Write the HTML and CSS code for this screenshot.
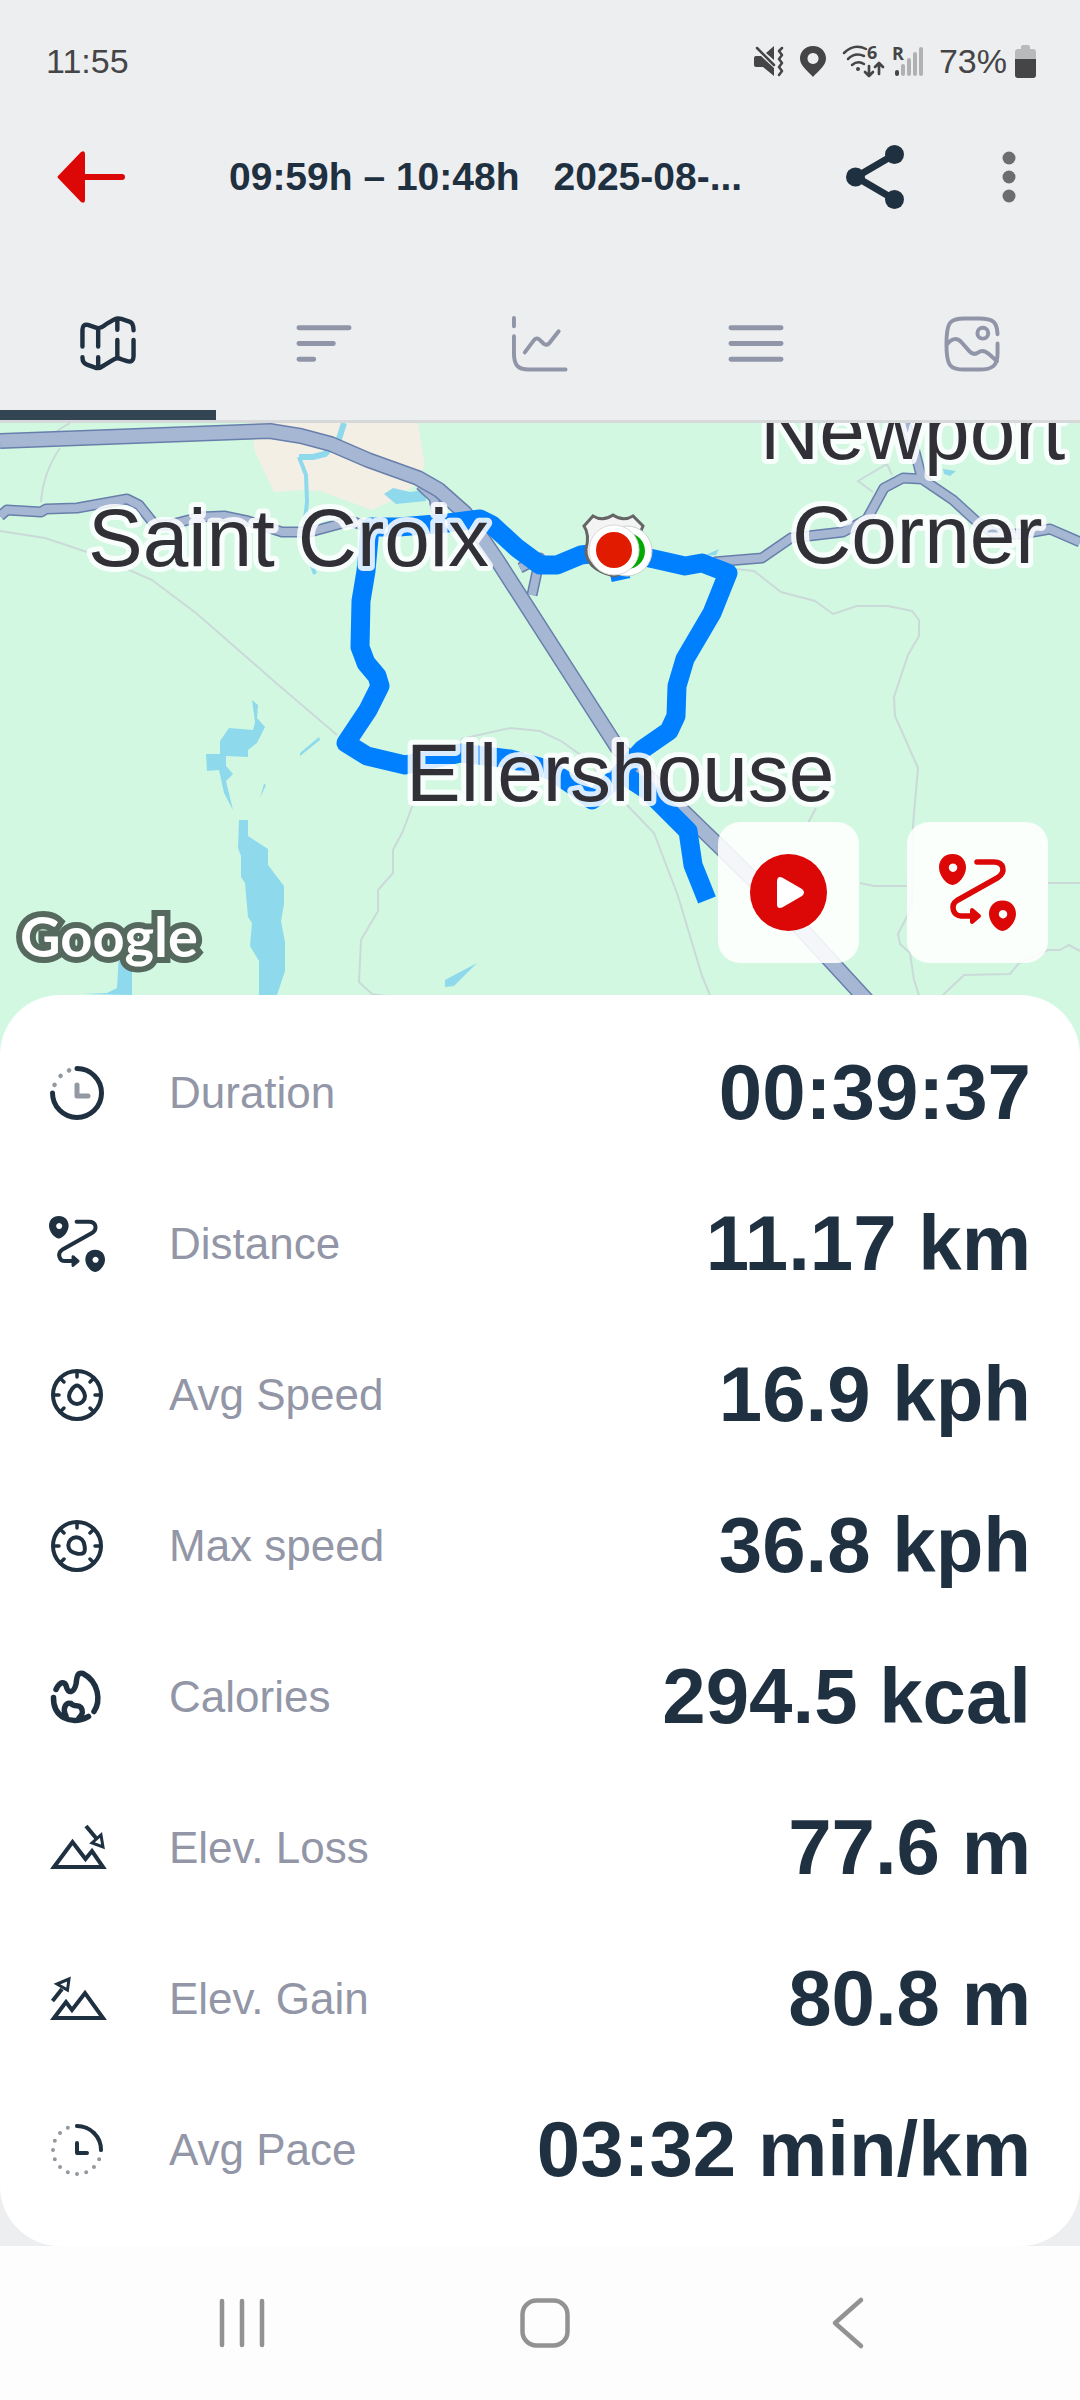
FILE: index.html
```html
<!DOCTYPE html>
<html lang="en">
<head>
  <meta charset="UTF-8">
  <meta name="viewport" content="width=device-width, initial-scale=1.0">
  <title>Track details</title>
  <link rel="stylesheet" href="styles.css">
</head>
<body>
  <!-- icons used more than once -->
  <svg class="sprite" aria-hidden="true">
    <symbol id="icon-route" viewBox="0 0 77 77">
      <path fill="currentColor" fill-rule="evenodd" d="M13.5 0C22 0 27 6 27 13.5C27 22 19 31 13.5 31S0 22 0 13.5C0 6 5 0 13.5 0ZM14 9.5a4.2 4.2 0 1 0 .01 0ZM63.5 46.5C72 46.5 77 52.5 77 60C77 68 69 77 63.5 77S50 68 50 60C50 52.5 55 46.5 63.5 46.5ZM64 56a4.2 4.2 0 1 0 .01 0Z"/>
      <path class="line" stroke-width="5.5" d="M38 8H55C65 8 67 18 59 23.5L18 46.5C11 51 14 62 22 62H34"/>
      <path fill="currentColor" stroke="currentColor" stroke-width="4" stroke-linejoin="round" d="M33 56L40 62L33 68Z"/>
    </symbol>
    <symbol id="icon-dial" viewBox="0 0 56 56">
      <circle class="line" cx="28" cy="28" r="24" stroke-width="4"/>
      <path class="line" stroke-width="3.5" d="M28 5V10M5 28H10M46 28H51M12 12L15 15M44 12L41 15M12 44L15 41M44 44L41 41"/>
    </symbol>
    <symbol id="icon-drop" viewBox="0 0 56 56">
      <path class="line" stroke-width="4" d="M28 18.5C31 18.5 36 25 36 29A8 8 0 0 1 20 29C20 25 25 18.5 28 18.5Z"/>
    </symbol>
  </svg>

  <header>
    <div class="status-bar">
      <span>11:55</span>
      <div class="status-icons">
        <svg width="30" height="31" viewBox="0 0 30 31" aria-label="Vibrate">
          <path fill="currentColor" d="M0 12Q0 10 2 10H7L20 22V30L9 21H2Q0 21 0 19ZM12 7L20 0V14Z"/>
          <path class="line" stroke-width="2.5" d="M3 2L20 19M28 2L25 5L28 9L25 13L28 17L25 21L28 25L25 29"/>
        </svg>
        <svg width="26" height="31" viewBox="0 0 26 31" aria-label="Location">
          <path fill="currentColor" fill-rule="evenodd" d="M13 0C21 0 26 6 26 12.5C26 20 18 25 13 31C8 25 0 20 0 12.5C0 6 5 0 13 0ZM13 7a5.5 5.5 0 1 0 .01 0Z"/>
        </svg>
        <div class="network">
          <svg width="42" height="33" viewBox="0 0 42 33" aria-label="Wi-Fi 6">
            <path class="line" stroke-width="2.5" d="M2 8Q12 -2 24 4M6 14Q13 7 22 11M10 20Q16 15 22 19"/>
            <circle cx="16" cy="24" r="2" fill="currentColor"/>
            <path class="line" stroke-width="2.7" d="M27 21V30M23 27L27 31L31 27M37 29V18M33 22L37 18L41 22"/>
            <text class="tiny" x="25" y="14">6</text>
          </svg>
          <svg width="31" height="31" viewBox="0 0 31 31" aria-label="Signal, roaming">
            <text class="tiny" x="0" y="14">R</text>
            <path stroke="#b0b1b2" stroke-width="4" stroke-linecap="round" d="M11 28V20M17 28V14M23 28V8M29 28V3"/>
            <path class="line" stroke-width="4" d="M5 26V28"/>
          </svg>
        </div>
        <div class="battery">
          <span>73%</span>
          <svg width="21" height="33" viewBox="0 0 21 33" aria-hidden="true">
            <path fill="#b9babb" d="M6 4V2Q6 0 8 0H13Q15 0 15 2V4H18Q21 4 21 7V15H0V7Q0 4 3 4Z"/>
            <path fill="currentColor" d="M0 14H21V30Q21 33 18 33H3Q0 33 0 30Z"/>
          </svg>
        </div>
      </div>
    </div>

    <div class="toolbar">
      <button type="button" class="back" aria-label="Back">
        <svg width="68" height="52" viewBox="0 0 68 52">
          <path fill="currentColor" d="M2 24L24 1Q28 -1 28 3V23H65Q68 23 68 26T65 29H28V49Q28 53 24 51L2 28Q-1 26 2 24Z"/>
        </svg>
      </button>
      <h1><span>09:59h – 10:48h</span> <span>2025-08-...</span></h1>
      <button type="button" class="share" aria-label="Share">
        <svg width="58" height="64" viewBox="0 0 58 64">
          <path class="line" stroke-width="7" d="M48.5 9.5L10 32L48.5 54.5"/>
          <g fill="currentColor"><circle cx="9.5" cy="32" r="9.5"/><circle cx="48.5" cy="9.5" r="9.5"/><circle cx="48.5" cy="54.5" r="9.5"/></g>
        </svg>
      </button>
      <button type="button" class="more" aria-label="More options">
        <svg width="14" height="52" viewBox="0 0 14 52" fill="currentColor">
          <circle cx="7" cy="7" r="6.5"/><circle cx="7" cy="26" r="6.5"/><circle cx="7" cy="45" r="6.5"/>
        </svg>
      </button>
    </div>

    <nav class="tabs">
      <button type="button" class="tab active" aria-label="Map">
        <svg viewBox="0 0 57 57"><path class="line" stroke-width="4.5" d="M2.500 31V14Q2.500 8 8 9L18.500 12.500Q22 12 27 8L35 3.500Q38 2 42 3L51 6Q54.500 7.500 54.500 14.500M18.500 13V31M38 3V14M2.500 42Q2.500 48 7 49.500L17 53Q20 53.500 24 50.500L34 44.500Q38 42 42 44L48 46Q54.500 47.500 54.500 41V24.500M18.500 42V53M38 24.500V43"/></svg>
      </button>
      <button type="button" class="tab" aria-label="Splits">
        <svg viewBox="0 0 57 57"><path class="line" stroke-width="5" d="M3 12H54M3 28H38M3 44H18"/></svg>
      </button>
      <button type="button" class="tab" aria-label="Charts">
        <svg viewBox="0 0 57 57"><path class="line" stroke-width="4" d="M2 2V10.500M2 20.500V38C2 50 6 54.500 17 54.500H54.500M13 37L22 25Q25 21 28.500 24.500L32 28Q35.500 31 38.500 27L47.500 15.500"/></svg>
      </button>
      <button type="button" class="tab" aria-label="Laps">
        <svg viewBox="0 0 57 57"><path class="line" stroke-width="5" d="M3 12H54M3 28H54M3 44H54"/></svg>
      </button>
      <button type="button" class="tab" aria-label="Photos">
        <svg viewBox="0 0 57 57"><path class="line" stroke-width="4" d="M54.500 18.500C54 6 50 2.500 36 2.500H21C6 2.500 2.500 6 2.500 28.500S6 54.500 21 54.500H36C50 54.500 54.500 50 54.500 38V28M3 29Q11 19 18 27L26 36Q30 40.500 35 37Q40 33.500 46 39L54 46"/><circle class="line" stroke-width="4" cx="39.5" cy="17.5" r="5.5"/></svg>
      </button>
    </nav>
  </header>

  <section class="map" aria-label="Track map">
    <svg class="map-canvas" viewBox="0 0 1080 632" preserveAspectRatio="xMidYMin slice">
      <path fill="#f3efe4" d="M251 0L255 29L274 69L303 67L320 68L372 87L389 79L415 62L425 42L418 0Z"/>

      <g class="water">
        <path d="M384 71L393 65L410 69L425 67L426 78L396 81Z"/>
        <path d="M252 277L258 282L257 295L265 304L257 320L248 327V334L226 333V343L233 351L226 358L233 387L224 370L219 347L207 348L206 331H220V318L229 305L253 307L255 299Z"/>
        <path d="M239 397H248V413L268 426V442L284 463V481L281 498L285 519V548L277 572V632H259V538L250 523L252 500L248 494L245 460L241 454V433L238 425Z"/>
        <path d="M119 530L132 535V572L83 571L107 570L117 565Z"/>
        <path d="M445 557L477 540L454 563L445 564ZM300 330L319 314L320 317L300 333ZM264 361L266 362L260 375ZM943 46L956 48L950 53L944 51ZM703 133L719 126L716 132Z"/>
      </g>
      <path class="stream" d="M344 0L339 16L325 31L313 34L299 34"/>
      <path class="stream thin" d="M299 34L306 52L307 79L304 105V120L315 151"/>

      <path class="lane" d="M50 14Q60 5 70 0M60 25Q43 50 41 79M0 108L45 115L93 131L152 157L196 190L275 259L337 312M413 381L403 408L393 427V450L378 467V488L361 517L359 559L372 571L386 573M461 316L510 305L540 308L561 318L585 335L626 381L654 410L678 473L702 553L710 572"/>
      <path class="lane" d="M736 146L754 148L781 169L815 178L833 191L857 183H888L912 188L919 197V213L908 232L894 274L895 293L918 345L913 402L912 484L898 511L900 521L910 530L914 557L919 572M816 385L808 400M860 460L874 463H907M1048 460H1080M943 572L964 552L1010 551L1019 540L1048 527H1060L1069 522L1080 528M873 69L858 58L887 41L892 52"/>

      <g class="roads-edge">
        <path id="road-north" d="M922 56L914 25L905 0"/>
        <path id="road-west" d="M0 93L7 87L41 89L46 86L77 85L127 76L139 82L155 102H169L200 94L224 93L248 98L282 109H310L351 98L365 103"/>
        <path id="road-east" d="M714 139L762 135L791 115L843 109L867 96L884 65L903 55L922 56L953 77L976 98L995 111H1022L1050 106L1080 119"/>
        <path id="road-ramp" d="M420 62L434 75L438 98M520 145L540 135L532 172"/>
      </g>
      <g class="roads">
        <use href="#road-north"/><use href="#road-west"/><use href="#road-east"/><use href="#road-ramp"/>
      </g>
      <path id="highway" class="highway-edge" d="M0 18L270 8L301 13L331 21L368 37L418 55L439 67L465 90L499 140L617 324L688 393L719 423L781 484L862 572L917 632"/>
      <path class="highway" d="M0 18L270 8L301 13L331 21L368 37L418 55L439 67L465 90L499 140L617 324L688 393L719 423L781 484L862 572L917 632"/>

      <path class="track" d="M621 157L616 134M707 477L693 442L688 408L647 367L621 350L592 377L578 366L550 347L510 336L461 330L405 342L367 333L346 320L368 287L380 263L377 253L366 240L360 224L361 178L366 148L370 104H399L448 100L480 96L492 102L517 125L540 142H557L581 132L616 128L654 136L685 143L702 140L728 150L712 190L685 236L677 263L676 293L669 308L643 326L621 350"/>

      <!-- start / finish markers on top of the road shield -->
      <path fill="#f4f4f4" stroke="#666" stroke-width="3" d="M584 103L593 93Q603 99 613 92Q623 99 633 93L643 103Q638 112 641 125Q643 145 614 153Q585 146 586 126Q590 112 584 103Z"/>
      <circle cx="627" cy="128" r="25" fill="#fff" stroke="#c9d3cd"/>
      <circle cx="627" cy="128" r="18" fill="#0a0"/>
      <circle cx="614" cy="127" r="25" fill="#fff" stroke="#d9d9d9"/>
      <circle cx="614" cy="127" r="18" fill="#e01b00"/>

      <g class="places">
        <text x="88" y="143">Saint Croix</text>
        <text x="406" y="378">Ellershouse</text>
        <text x="760" y="36">Newport</text>
        <text x="792" y="140">Corner</text>
      </g>
      <text class="google" x="20" y="534">Google</text>
    </svg>
    <div class="map-actions">
      <button type="button" class="map-button" aria-label="Play track">
        <svg viewBox="0 0 77 77"><circle cx="38.5" cy="38.5" r="38.5" fill="currentColor"/><path fill="#fff" d="M27 28Q27 21 33 24L52 35Q56 38.500 52 42L33 53Q27 56 27 50Z"/></svg>
      </button>
      <button type="button" class="map-button" aria-label="Show route">
        <svg><use href="#icon-route"/></svg>
      </button>
    </div>
  </section>

  <main class="sheet">
    <dl class="stats">
      <div class="stat">
        <dt>
          <svg viewBox="0 0 56 56"><path class="line" stroke-width="5" d="M28 3.500A24.500 24.500 0 1 1 3.500 28"/><path class="dots" stroke-width="4.500" d="M5.500 20L5.600 19.900M11.500 11L11.600 10.900M20 5.500L20.100 5.400"/><path class="line muted" stroke-width="5" d="M28 20V31H39"/></svg>
          Duration
        </dt>
        <dd>00:39:37</dd>
      </div>
      <div class="stat">
        <dt><svg><use href="#icon-route"/></svg>Distance</dt>
        <dd>11.17 km</dd>
      </div>
      <div class="stat">
        <dt><svg viewBox="0 0 56 56"><use href="#icon-dial"/><use href="#icon-drop"/></svg>Avg Speed</dt>
        <dd>16.9 kph</dd>
      </div>
      <div class="stat">
        <dt><svg viewBox="0 0 56 56"><use href="#icon-dial"/><use href="#icon-drop" transform="rotate(135 28 28)"/></svg>Max speed</dt>
        <dd>36.8 kph</dd>
      </div>
      <div class="stat">
        <dt>
          <svg viewBox="0 0 56 56"><path class="line" stroke-width="5.500" d="M7 20.500C11 12 16 12 17.500 18C19 25 25 24 27 15C28 8 28 3 34 4.500C50 13 52 32 45 42.500M4.500 28.500C4 48 22 57 39.500 47.500M17 47C13 39 17 33 22 34.500C26 39 29 35 32 38.500C35 43 33 46 30 49"/></svg>
          Calories
        </dt>
        <dd>294.5 kcal</dd>
      </div>
      <div class="stat">
        <dt>
          <svg viewBox="0 0 56 56"><path class="sharp" d="M5 47L23.500 22L36.500 39L43 31L54 47Z"/><path class="sharp" stroke-width="5" d="M37 6L47 18"/><path class="sharp thin" d="M52 15L54 27L43 23Z"/></svg>
          Elev. Loss
        </dt>
        <dd>77.6 m</dd>
      </div>
      <div class="stat">
        <dt>
          <svg viewBox="0 0 56 56"><path class="sharp" d="M5 47L17 31L23 39L36 22L54 47Z"/><path class="sharp" stroke-width="5" d="M3.500 30L13 18"/><path class="sharp thin" d="M20 8L18.500 19L8 13Z"/></svg>
          Elev. Gain
        </dt>
        <dd>80.8 m</dd>
      </div>
      <div class="stat">
        <dt>
          <svg viewBox="0 0 56 56"><circle class="dots ring" stroke-width="4" cx="28" cy="28" r="24" pathLength="160"/><path class="line" stroke-width="4" d="M28 4A24 24 0 0 1 52 28M28 21V31H38"/></svg>
          Avg Pace
        </dt>
        <dd>03:32 min/km</dd>
      </div>
    </dl>
  </main>

  <nav class="system-nav">
    <button type="button" aria-label="Recent apps"><svg viewBox="0 0 50 50"><path class="line" stroke-width="4.5" d="M5 3V47M25 3V47M45 3V47"/></svg></button>
    <button type="button" aria-label="Home"><svg viewBox="0 0 50 50"><rect class="line" x="2.5" y="2.5" width="45" height="45" rx="14" stroke-width="4.5"/></svg></button>
    <button type="button" aria-label="Back"><svg viewBox="0 0 50 50"><path class="line" stroke-width="4.5" d="M38 2L12 25L38 48"/></svg></button>
  </nav>
</body>
</html>
```
FILE: styles.css
```css
* {
  box-sizing: border-box;
}
body {
  margin: 0;
  min-height: 100vh;
  display: flex;
  flex-direction: column;
  background-color: #edeef0;
  color: #1f3040;
  font-family: "Liberation Sans", sans-serif;
}
button {
  padding: 0;
  border: none;
  background: none;
  color: inherit;
  font: inherit;
  cursor: pointer;
}
svg {
  display: block;
  overflow: visible;
}
.sprite {
  position: absolute;
  width: 0;
  height: 0;
}
.line {
  fill: none;
  stroke: currentColor;
  stroke-linecap: round;
  stroke-linejoin: round;
}

/* status bar */
.status-bar {
  display: flex;
  align-items: center;
  justify-content: space-between;
  height: 87px;
  padding: 35px 44px 0 46px;
  color: #454547;
  font-size: 34px;
}
.status-icons {
  display: flex;
  align-items: center;
  gap: 16px;
}
.network, .battery {
  display: flex;
  align-items: center;
  gap: 8px;
}
.tiny {
  font: bold 18px "Open Sans", sans-serif;
  fill: currentColor;
}

/* toolbar */
.toolbar {
  display: flex;
  align-items: center;
  height: 180px;
  padding: 0 64px 0 57px;
}
.back {
  color: #dc0808;
}
.more {
  margin-left: 98px;
  color: #6d6d6e;
}
h1 {
  flex: 1;
  display: flex;
  gap: 34px;
  margin: 0 0 0 104px;
  font-size: 39px;
  font-weight: bold;
  white-space: nowrap;
}

/* tabs */
.tabs {
  display: flex;
  border-bottom: 3px solid #d7d8d9;
}
.tab {
  flex: 1;
  display: flex;
  justify-content: center;
  align-items: center;
  height: 153px;
  border-top: 10px solid transparent;
  border-bottom: 10px solid transparent;
  color: #9095a8;
}
.tab svg {
  width: 56px;
  height: 56px;
}
.tab.active {
  color: #1f3040;
  border-bottom-color: #334452;
}

/* map */
.map {
  position: relative;
  background-color: #d2f8e2;
}
.map-canvas {
  width: 100%;
  height: 632px;
  overflow: hidden;
}
.water {
  fill: #8fd9ec;
}
.stream {
  fill: none;
  stroke: #8fd9ec;
  stroke-width: 6;
}
.stream.thin {
  stroke-width: 4;
}
.lane {
  fill: none;
  stroke: #cbdad9;
  stroke-width: 2;
}
/* a road is a wide dark line with a lighter one drawn over it */
.roads-edge, .highway-edge {
  fill: none;
  stroke: #687fab;
  stroke-width: 11;
  stroke-linejoin: round;
}
.roads, .highway {
  fill: none;
  stroke: #a6b7d4;
  stroke-width: 8;
  stroke-linejoin: round;
}
.highway-edge {
  stroke-width: 16;
}
.highway {
  stroke-width: 13;
}
.track {
  fill: none;
  stroke: #0080ff;
  stroke-width: 19;
  stroke-linejoin: round;
}
.places {
  font-size: 82px;
  fill: #303036;
  stroke: rgba(255, 255, 255, 0.85);
  stroke-width: 10;
  stroke-linejoin: round;
  paint-order: stroke;
}
.google {
  font: bold 56px Lato, sans-serif;
  fill: #fff;
  stroke: #56695e;
  stroke-width: 12;
  paint-order: stroke;
}
.map-actions {
  position: absolute;
  right: 32px;
  bottom: 92px;
  display: flex;
  gap: 48px;
}
.map-button {
  display: grid;
  place-items: center;
  width: 141px;
  height: 141px;
  border-radius: 22px;
  background-color: rgba(255, 255, 255, 0.88);
  color: #dc0808;
}
.map-button svg {
  width: 77px;
  height: 77px;
}

/* stats */
.sheet {
  position: relative;
  margin-top: -60px;
  padding: 22px 49px 21px;
  border-radius: 60px;
  background-color: #fff;
}
.stats {
  margin: 0;
}
.stat {
  display: flex;
  align-items: center;
  justify-content: space-between;
  height: 151px;
}
.stat dt {
  display: flex;
  align-items: center;
  gap: 64px;
  color: #9296a6;
  font-size: 44px;
}
.stat dt svg {
  width: 56px;
  height: 56px;
  color: #1f3040;
}
.stat dd {
  margin: 0;
  font-size: 78px;
  font-weight: bold;
  white-space: nowrap;
}
.muted {
  stroke: #9299a2;
}
.dots {
  fill: none;
  stroke: #92989f;
  stroke-linecap: round;
}
.ring {
  stroke-dasharray: 0 10;
}
.sharp {
  fill: none;
  stroke: currentColor;
  stroke-width: 4;
}
.sharp.thin {
  stroke-width: 3;
}

/* android navigation */
.system-nav {
  display: flex;
  flex: 1;
  min-height: 154px;
  padding: 0 81px 0 91px;
  background-color: #fdfdfd;
  color: #929292;
}
.system-nav button {
  flex: 1;
  display: grid;
  place-items: center;
}
.system-nav svg {
  width: 50px;
  height: 50px;
}
```
